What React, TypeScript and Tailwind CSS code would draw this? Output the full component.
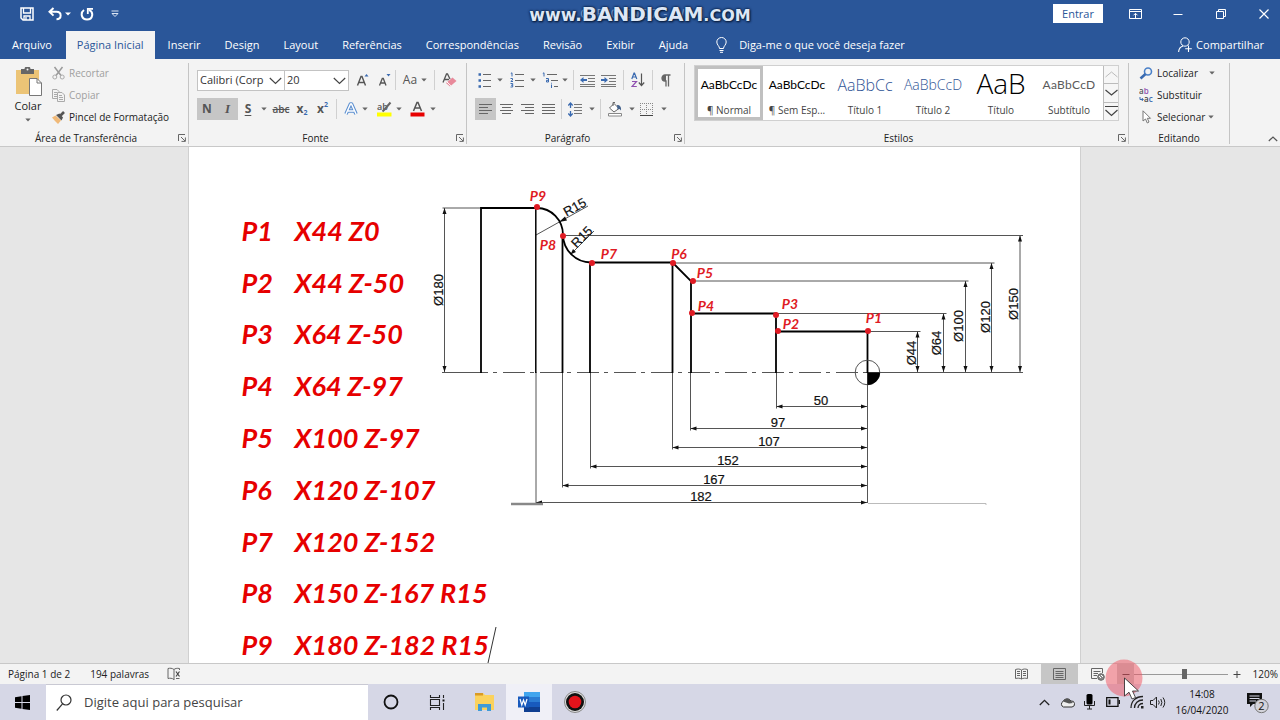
import React from "react";

type Kids = { children?: React.ReactNode };

function Icon({ w = 16, h = 16, children, className = "" }: Kids & { w?: number; h?: number; className?: string }) {
  return (
    <svg width={w} height={h} viewBox={`0 0 ${w} ${h}`} fill="none" className={`shrink-0 ${className}`} aria-hidden="true">
      {children}
    </svg>
  );
}

function Caret({ className = "" }: { className?: string }) {
  return (
    <Icon w={6} h={4} className={className}>
      <path d="M0.3 0.5H5.7L3 3.5Z" fill="#666" />
    </Icon>
  );
}

function Tool({ label, className = "w-5", children }: Kids & { label: string; className?: string }) {
  return (
    <button type="button" aria-label={label} title={label} className={`flex h-[22px] shrink-0 items-center justify-center ${className}`}>
      {children}
    </button>
  );
}

function Divider() {
  return <div className="h-5 w-px shrink-0 bg-[#d0d0d0]" />;
}

function Launcher({ label }: { label: string }) {
  return (
    <button type="button" aria-label={label} className="absolute right-0 bottom-0 p-0.5">
      <Icon w={8} h={8}>
        <path d="M0.5 7V0.5H7M3 3L7 7M7.4 3.5V7.4H3.5" stroke="#666" />
      </Icon>
    </button>
  );
}

function Group({ title, launcher = true, className, titlePad = "", children }: Kids & { title: string; launcher?: boolean; className: string; titlePad?: string }) {
  return (
    <section className={`relative mt-1 mb-0.5 flex shrink-0 flex-col border-r border-[#c4c4c4] ${className}`}>
      <div className="min-h-0 flex-1">{children}</div>
      <h2 className={`text-center text-[10px] leading-3 text-[#222] ${titlePad}`}>{title}</h2>
      {launcher && <Launcher label={`Opções de ${title}`} />}
    </section>
  );
}

function TitleBar() {
  return (
    <header className="relative flex h-[31px] shrink-0 items-center bg-[#2a5699] pl-[19px]">
      <div className="-mt-1 flex items-center">
        <Tool label="Salvar" className="w-4">
          <Icon w={14} h={14}>
            <path d="M1 1H13V13H3L1 11Z" stroke="#fff" strokeWidth="1.5" />
            <path d="M3.5 1V6H10.5V1M4 13V9H10V13M6 10V13" stroke="#fff" strokeWidth="1.3" />
          </Icon>
        </Tool>
        <Tool label="Desfazer" className="ml-3 w-4">
          <Icon w={14} h={14}>
            <path d="M5.5 1L1.5 4.8L5.5 8.6M2 4.8H8.5C14 4.8 14 12 8.5 12.2" stroke="#fff" strokeWidth="2" />
          </Icon>
        </Tool>
        <Icon w={6} h={4} className="ml-0.5">
          <path d="M0 0.5H6L3 3.5Z" fill="#fff" />
        </Icon>
        <Tool label="Refazer" className="ml-2 w-4">
          <Icon w={14} h={14}>
            <path d="M4 3C0 6 1.500 12.500 7 12.500C13 12.500 14 5 9 2.800" stroke="#fff" strokeWidth="2" />
            <path d="M7.800 7V1.800H13" stroke="#fff" strokeWidth="1.800" />
          </Icon>
        </Tool>
        <Tool label="Personalizar acesso rápido" className="ml-3 w-4">
          <Icon w={8} h={8}>
            <path d="M0.500 1H7.500M1 3.500L4 6.500L7 3.500Z" stroke="#dbe5f3" />
          </Icon>
        </Tool>
      </div>

      <div className="absolute inset-x-0 top-1 flex justify-center pl-1">
        <h1 className="text-[12px] leading-5 whitespace-pre text-[#8ba6cf]">CURSO CNC 7  -  Word</h1>
      </div>
      <div className="absolute inset-x-0 top-0 flex h-[29px] items-baseline justify-center font-['DejaVu_Sans'] leading-[29px] font-bold text-[#dde7f5] [text-shadow:0_0_3px_#0b1f40,0_0_2px_#0b1f40,1px_1px_2px_#0b1f40]">
        <span className="text-[17px]">www.</span>
        <span className="text-[20px]">BANDICAM</span>
        <span className="text-[16px]">.COM</span>
      </div>

      <div className="relative -mt-1 ml-auto flex items-center">
        <button type="button" className="mr-4 h-[19px] w-[50px] bg-white text-[11px] leading-4 text-[#2a5699]">Entrar</button>
        <div className="flex gap-[11px]">
          <Tool label="Opções de exibição da faixa" className="w-8">
            <Icon w={13} h={10}>
              <path d="M0.500 0.500H12.500V9.500H0.500ZM0.500 2.500H12.500M6.500 9V4.500M4.500 6.300L6.500 4.300L8.500 6.300" stroke="#fff" />
            </Icon>
          </Tool>
          <Tool label="Minimizar" className="w-8">
            <Icon w={10} h={10}>
              <path d="M0.500 5.500H9.500" stroke="#fff" />
            </Icon>
          </Tool>
          <Tool label="Restaurar" className="w-8">
            <Icon w={10} h={10}>
              <path d="M0.500 2.500H7.500V9.500H0.500ZM2.500 2.500V0.500H9.500V7.500H7.500" stroke="#fff" />
            </Icon>
          </Tool>
          <Tool label="Fechar" className="w-8">
            <Icon w={10} h={10}>
              <path d="M0.500 0.500L9.500 9.500M9.500 0.500L0.500 9.500" stroke="#fff" strokeWidth="1.200" />
            </Icon>
          </Tool>
        </div>
      </div>
    </header>
  );
}

const TABS = ["Inserir", "Design", "Layout", "Referências", "Correspondências", "Revisão", "Exibir", "Ajuda"];

function TabBar() {
  return (
    <nav className="flex h-7 shrink-0 items-stretch bg-[#2a5699] text-[11px] text-white">
      <a href="#arquivo" className="flex items-center pr-3.5 pl-3">Arquivo</a>
      <a href="#inicio" className="flex items-center bg-[#f3f3f3] px-[11px] text-[#2a5699]">Página Inicial</a>
      <div className="flex gap-6 pl-[13px]">
        {TABS.map((t) => (
          <a key={t} href={`#${t}`} className="flex items-center">{t}</a>
        ))}
      </div>
      <button type="button" className="ml-7 flex items-center gap-3">
        <Icon w={11} h={16}>
          <path d="M3.500 11.500C3.500 9 0.800 8 0.800 5A4.700 4.500 0 0 1 10.200 5C10.200 8 7.500 9 7.500 11.500ZM3.500 13.500H7.500M4 15.300H7" stroke="#fff" />
        </Icon>
        Diga-me o que você deseja fazer
      </button>
      <button type="button" className="mr-4 ml-auto flex items-center gap-1">
        <Icon w={14} h={16}>
          <circle cx="7" cy="5" r="4.200" stroke="#fff" />
          <path d="M0.600 15C0.800 11.500 2.500 9.800 5 9M10.500 8.500V15M7.200 11.700H13.800" stroke="#fff" strokeWidth="1.100" />
        </Icon>
        Compartilhar
      </button>
    </nav>
  );
}

function ClipboardGroup() {
  return (
    <Group title="Área de Transferência" className="w-[189px]" titlePad="pr-4">
      <div className="flex pt-1 pl-3 text-[10px] leading-4 whitespace-nowrap">
        <button type="button" className="flex w-8 shrink-0 flex-col items-center">
          <Icon w={28} h={29}>
            <path d="M2 3H25V27H2Z" fill="#ecc476" />
            <path d="M7 2H10.500A3 2.500 0 0 1 16.500 2H20V7H7Z" fill="#666" />
            <circle cx="13.500" cy="2.500" r="1" fill="#f3f3f3" />
            <path d="M15.500 11.500H23L27.500 16V28.500H15.500Z" fill="#fff" stroke="#777" />
            <path d="M23 11.500V16H27.500" stroke="#777" />
          </Icon>
          <span className="mt-0.5 text-[11px] text-[#222]">Colar</span>
          <Caret className="mt-1" />
        </button>
        <div className="-mt-0.5 ml-2 flex flex-col items-start gap-[6px] text-[#a0a0a0]">
          <button type="button" className="flex items-center gap-1">
            <Icon w={13} h={14}>
              <path d="M2.500 1L9 9.500M10.500 1L4 9.500" stroke="#9a9a9a" strokeWidth="1.500" />
              <circle cx="2.800" cy="11" r="2" stroke="#aaa" />
              <circle cx="10.200" cy="11" r="2" stroke="#aaa" />
            </Icon>
            Recortar
          </button>
          <button type="button" className="flex items-center gap-1">
            <Icon w={13} h={13}>
              <path d="M0.500 0.500H5L7 2.500V9.500H0.500ZM2 3.500H5M2 5.500H5M2 7.500H5" stroke="#aaa" />
              <path d="M5.500 3.500H10L12.500 6V12.500H5.500Z" fill="#f3f3f3" stroke="#aaa" />
              <path d="M7 6.500H10M7 8.500H11M7 10.500H11" stroke="#aaa" />
            </Icon>
            Copiar
          </button>
          <button type="button" className="flex items-center gap-1 text-[#222]">
            <Icon w={13} h={13}>
              <path d="M0 6.500L3.500 4.500L9 9.500L6 13C4 11 2 9 0 6.500Z" fill="#f0b978" />
              <path d="M4 4L7.500 2.500L11 6.500L9.500 9.500Z" fill="#555" />
              <path d="M8.500 4.500L12 1" stroke="#555" strokeWidth="2.600" />
            </Icon>
            Pincel de Formatação
          </button>
        </div>
      </div>
    </Group>
  );
}

function Combo({ label, value, className }: { label: string; value: string; className: string }) {
  return (
    <div className={`relative h-[21px] shrink-0 border border-[#c3c3c3] bg-white ${className}`}>
      <select aria-label={label} className="block h-full w-full appearance-none bg-transparent pr-4 pl-0.5 text-[11px] leading-4 text-[#333] outline-none">
        <option>{value}</option>
      </select>
      <Icon w={13} h={8} className="pointer-events-none absolute top-1.5 right-0.5">
        <path d="M0.800 1L6.500 6.500L12.200 1" stroke="#444" strokeWidth="1.200" />
      </Icon>
    </div>
  );
}

function FontGroup() {
  return (
    <Group title="Fonte" className="w-[278px]" titlePad="pr-6">
      <div className="flex items-center pt-[6px] pl-2">
        <Combo label="Fonte" value="Calibri (Corp" className="w-[88px]" />
        <Combo label="Tamanho" value="20" className="-ml-px w-[65px]" />
        <Tool label="Aumentar fonte" className="ml-0.5 w-[22px]">
          <Icon w={13} h={14}>
            <path d="M1.500 12.500L5 3.500H6L9.500 12.500M3 9.500H8" stroke="#555" strokeWidth="1.400" />
            <path d="M8.500 3.500L10.500 1L12.500 3.500Z" fill="#3a6ab0" />
          </Icon>
        </Tool>
        <Tool label="Diminuir fonte" className="w-[22px]">
          <Icon w={13} h={14}>
            <path d="M1.500 12.500L4.300 5.500H5.300L8 12.500M2.500 10H7" stroke="#555" strokeWidth="1.300" />
            <path d="M8.500 1L10.500 3.500L12.500 1Z" fill="#3a6ab0" />
          </Icon>
        </Tool>
        <Divider />
        <Tool label="Maiúsculas e minúsculas" className="w-[38px] gap-1 text-[12px] text-[#555]">
          Aa <Caret />
        </Tool>
        <Divider />
        <Tool label="Limpar formatação" className="ml-1 w-5">
          <Icon w={15} h={15}>
            <path d="M1 9.500L4.500 1H5.500L8 6M2.500 6.500H7" stroke="#555" strokeWidth="1.300" />
            <path d="M10.500 4.500L14.500 8L8 13.500L4 10Z" fill="#e8899a" />
            <path d="M5 9L9 12.800" stroke="#fff" />
          </Icon>
        </Tool>
      </div>
      <div className="mt-[7px] flex items-center pl-2">
        <Tool label="Negrito" className="w-5 bg-[#c6c6c6] text-[12px] font-bold text-[#555]">N</Tool>
        <Tool label="Itálico" className="w-[21px] bg-[#c6c6c6] font-['Liberation_Serif'] text-[13px] font-bold text-[#555] italic">I</Tool>
        <Tool label="Sublinhado" className="w-5 text-[12px] font-bold text-[#555]"><span className="underline underline-offset-2">S</span></Tool>
        <Tool label="Mais sublinhados" className="w-3"><Caret /></Tool>
        <Tool label="Tachado" className="w-[22px] text-[10px] font-semibold text-[#555]"><span className="line-through">abc</span></Tool>
        <Tool label="Subscrito" className="w-5 text-[12px] leading-3 font-bold text-[#555]">
          x<span className="mt-2 text-[7px] text-[#3a6ab0]">2</span>
        </Tool>
        <Tool label="Sobrescrito" className="w-[21px] text-[12px] leading-3 font-bold text-[#555]">
          x<span className="-mt-2 text-[7px] text-[#3a6ab0]">2</span>
        </Tool>
        <div className="ml-[3px]"><Divider /></div>
        <Tool label="Efeitos de texto" className="ml-1 w-5">
          <Icon w={14} h={14}>
            <path d="M2 12L6.500 2H7.500L12 12M4 9H10" stroke="#5b8fd0" strokeWidth="3.600" strokeLinejoin="round" />
            <path d="M2 12L6.500 2H7.500L12 12M4 9H10" stroke="#fff" strokeWidth="1.500" />
          </Icon>
        </Tool>
        <Tool label="Mais efeitos" className="w-2"><Caret /></Tool>
        <Tool label="Realce" className="ml-1 w-[22px]">
          <svg width="17" height="16" viewBox="0 0 17 16" aria-hidden="true">
            <text x="1" y="9" fontSize="9" fontWeight="600" fill="#555">ab</text>
            <path d="M14.500 1.500L8.500 8.500L6.500 10.500" stroke="#666" strokeWidth="2" fill="none" />
            <path d="M1 11.500H15.500V15.500H1Z" fill="#ff0" />
          </svg>
        </Tool>
        <Tool label="Cores de realce" className="w-2"><Caret /></Tool>
        <Tool label="Cor da fonte" className="ml-1 w-5">
          <Icon w={15} h={16}>
            <path d="M3.500 10L7 1.500H8L11.500 10M5 7H10" stroke="#555" strokeWidth="1.500" />
            <path d="M0.500 11.500H14.500V15.500H0.500Z" fill="#e80000" />
          </Icon>
        </Tool>
        <Tool label="Mais cores" className="w-3"><Caret /></Tool>
      </div>
    </Group>
  );
}

const ALIGN = [
  { label: "Alinhar à esquerda", d: "M0 1.500H13M0 4.500H9M0 7.500H13M0 10.500H9" },
  { label: "Centralizar", d: "M0 1.500H13M2 4.500H11M0 7.500H13M2 10.500H11" },
  { label: "Alinhar à direita", d: "M0 1.500H13M4 4.500H13M0 7.500H13M4 10.500H13" },
  { label: "Justificar", d: "M0 1.500H13M0 4.500H13M0 7.500H13M0 10.500H13" },
];

function ParagraphGroup() {
  return (
    <Group title="Parágrafo" className="w-[218px]" titlePad="pr-4">
      <div className="flex items-center pt-[6px] pl-2">
        <Tool label="Marcadores" className="w-[31px] gap-1.5">
          <Icon w={13} h={15}>
            <path d="M0.500 1.500H3M0.500 7.500H3M0.500 13.500H3" stroke="#3a6ab0" strokeWidth="2.400" />
            <path d="M5 1.500H13M5 7.500H13M5 13.500H13" stroke="#666" />
          </Icon>
          <Caret />
        </Tool>
        <Tool label="Numeração" className="w-[33px] gap-1.5">
          <Icon w={14} h={16}>
            <path d="M0.800 1.500L2 0.800V4.500M0.500 6.500H2.500V8L0.800 9.500H3M0.500 11.500H2.700V15H0.500M1 13.200H2.700" stroke="#3a6ab0" />
            <path d="M5 2.500H14M5 8.500H14M5 14.500H14" stroke="#666" />
          </Icon>
          <Caret />
        </Tool>
        <Tool label="Lista de vários níveis" className="w-[32px] gap-1">
          <Icon w={16} h={16}>
            <path d="M0.800 1.500L2 0.800V4.500M4 6.500H6.500V10H4.500V8.300H6.500M9.500 12.500V16M9.500 10.800V11.600" stroke="#3a6ab0" />
            <path d="M5 2.500H15M9 8.500H16M12 14.500H16" stroke="#666" />
          </Icon>
          <Caret />
        </Tool>
        <div className="ml-0.5"><Divider /></div>
        <Tool label="Diminuir recuo" className="ml-[3px] w-5">
          <Icon w={15} h={13}>
            <path d="M0 1.500H15M8 4.500H15M8 7.500H15M0 10.500H15M0 12.500H15" stroke="#777" />
            <path d="M0 6L3.500 3V5H7V7H3.500V9Z" fill="#3a6ab0" />
          </Icon>
        </Tool>
        <Tool label="Aumentar recuo" className="w-[22px]">
          <Icon w={15} h={13}>
            <path d="M0 1.500H15M8 4.500H15M8 7.500H15M0 10.500H15M0 12.500H15" stroke="#777" />
            <path d="M7 6L3.500 3V5H0V7H3.500V9Z" fill="#3a6ab0" />
          </Icon>
        </Tool>
        <div className="ml-1"><Divider /></div>
        <Tool label="Classificar" className="ml-1 w-5">
          <Icon w={14} h={16}>
            <path d="M0.800 7L3 1H3.500L5.800 7M1.500 5H5" stroke="#3a6ab0" strokeWidth="1.200" />
            <path d="M1 9.500H5.500L1 14.500H5.800" stroke="#9050b0" strokeWidth="1.200" />
            <path d="M10.500 1.500V13.500M7.800 10.500L10.500 13.500L13.200 10.500" stroke="#555" strokeWidth="1.200" />
          </Icon>
        </Tool>
        <div className="ml-1"><Divider /></div>
        <Tool label="Mostrar tudo" className="ml-[3px] w-5">
          <Icon w={10} h={13}>
            <path d="M9.500 1H4A3 3 0 0 0 4 7H5V12.500M7.500 1V12.500" stroke="#666" strokeWidth="1.300" />
            <path d="M5 1H4A3 3 0 0 0 4 7H5Z" fill="#666" />
          </Icon>
        </Tool>
      </div>
      <div className="mt-[7px] flex items-center pl-2">
        {ALIGN.map((a, i) => (
          <Tool key={a.label} label={a.label} className={i === 0 ? "w-[21px] bg-[#c6c6c6]" : "w-[21px]"}>
            <Icon w={13} h={12}><path d={a.d} stroke="#666" /></Icon>
          </Tool>
        ))}
        <div className="ml-0.5"><Divider /></div>
        <Tool label="Espaçamento" className="ml-1 w-[30px] gap-1.5">
          <Icon w={15} h={15}>
            <path d="M2.500 1V6M2.500 9V14M0.300 3.500L2.500 1L4.700 3.500M0.300 11.500L2.500 14L4.700 11.500" stroke="#3a6ab0" strokeWidth="1.300" />
            <path d="M6 2.500H14M6 5.500H14M6 8.500H14M6 11.500H14" stroke="#777" />
          </Icon>
          <Caret />
        </Tool>
        <div className="ml-1"><Divider /></div>
        <Tool label="Sombreamento" className="ml-1 w-[32px] gap-1.5">
          <Icon w={16} h={16}>
            <path d="M7 2.500L12 7.500L7 11L2.500 7Z" fill="#fff" stroke="#666" />
            <path d="M6 5V1.500H8" stroke="#666" />
            <path d="M10 4C13 4 14.500 6 14 9.500C13 8 12 7.500 10.500 8.500Z" fill="#44628c" />
            <path d="M1.500 12.500H14.500V15H1.500Z" fill="#fff" stroke="#888" />
          </Icon>
          <Caret />
        </Tool>
        <Tool label="Bordas" className="w-[32px] gap-2">
          <Icon w={13} h={13}>
            <path d="M0.500 0V12M6.500 0V12M12.500 0V12M0 0.500H13M0 6.500H13" stroke="#888" strokeDasharray="1 1" />
            <path d="M0 12.500H13" stroke="#444" />
          </Icon>
          <Caret />
        </Tool>
      </div>
    </Group>
  );
}

const STYLES = [
  { name: "¶ Normal", sample: "AaBbCcDc", cls: "leading-[38px] text-[12px] text-black font-['Lato']" },
  { name: "¶ Sem Esp...", sample: "AaBbCcDc", cls: "leading-[38px] text-[12px] text-black font-['Lato']" },
  { name: "Título 1", sample: "AaBbCc", cls: "leading-[38px] text-[16px] text-[#2f5496] font-light" },
  { name: "Título 2", sample: "AaBbCcD", cls: "leading-[38px] text-[14px] text-[#2f5496] font-light" },
  { name: "Título", sample: "AaB", cls: "leading-[34px] text-[28px] text-black font-light" },
  { name: "Subtítulo", sample: "AaBbCcD", cls: "leading-[38px] text-[12px] text-[#5a5a5a] font-['Lato'] tracking-wide" },
];

function StylesGroup() {
  return (
    <Group title="Estilos" className="w-[444px]" titlePad="pr-4">
      <div className="mt-[2px] ml-[9px] flex w-[425px] border border-[#d0d0d0] bg-white">
        {STYLES.map((s, i) => (
          <button
            key={s.name}
            type="button"
            className={`flex h-[54px] w-[68px] shrink-0 flex-col pb-px ${i === 0 ? "outline-[3px] -outline-offset-[3px] outline-[#c0c0c0]" : ""}`}
          >
            <span className={`h-[36px] w-full text-center whitespace-nowrap ${s.cls}`}>{s.sample}</span>
            <span className="w-full text-center text-[10px] leading-4 whitespace-nowrap text-[#444]">{s.name}</span>
          </button>
        ))}
        <div className="flex flex-1 flex-col divide-y divide-[#bbb] border-l border-[#bbb] bg-[#f6f6f6]">
          <button type="button" aria-label="Estilos anteriores" className="flex flex-1 items-center justify-center">
            <Icon w={13} h={7}><path d="M0.500 6L6.500 1L12.500 6" stroke="#bbb" /></Icon>
          </button>
          <button type="button" aria-label="Próximos estilos" className="flex flex-1 items-center justify-center">
            <Icon w={13} h={7}><path d="M0.500 1L6.500 6L12.500 1" stroke="#444" strokeWidth="1.200" /></Icon>
          </button>
          <button type="button" aria-label="Mais estilos" className="flex flex-1 items-center justify-center">
            <Icon w={13} h={12}><path d="M0 1.500H13M0.500 5L6.500 10.500L12.500 5" stroke="#444" strokeWidth="1.200" /></Icon>
          </button>
        </div>
      </div>
    </Group>
  );
}

function EditingGroup() {
  return (
    <Group title="Editando" launcher={false} className="w-[101px]">
      <div className="flex flex-col items-start gap-[6px] pt-0.5 pl-2.5 text-[10px] leading-4 text-[#222]">
        <button type="button" className="flex items-center gap-[3px]">
          <Icon w={15} h={13}>
            <circle cx="9" cy="4.500" r="3.500" stroke="#4a80c8" strokeWidth="1.600" />
            <path d="M6.500 7L1.500 11.500" stroke="#3a6ab0" strokeWidth="2.600" />
          </Icon>
          Localizar <Caret className="ml-2" />
        </button>
        <button type="button" className="flex items-center gap-[3px]">
          <svg width="15" height="15" viewBox="0 0 15 15" fontSize="8" fontWeight="600" aria-hidden="true">
            <text x="0" y="6" fill="#555">a<tspan fill="#9050b0">b</tspan></text>
            <text x="5" y="14" fill="#444">a<tspan fill="#3a6ab0">c</tspan></text>
            <path d="M1 9V11.500H4M2.800 10L4.300 11.500L2.800 13" stroke="#3a6ab0" fill="none" />
          </svg>
          Substituir
        </button>
        <button type="button" className="flex items-center gap-[3px]">
          <Icon w={15} h={14}>
            <path d="M4 0.800V11L6.500 9L8.300 13L10 12L8.300 8.300H11.500Z" fill="#fff" stroke="#777" />
          </Icon>
          Selecionar <Caret />
        </button>
      </div>
    </Group>
  );
}

function Ribbon() {
  return (
    <div className="flex h-[88px] shrink-0 border-b border-[#c8c8c8] bg-[#f3f3f3]">
      <ClipboardGroup />
      <FontGroup />
      <ParagraphGroup />
      <StylesGroup />
      <EditingGroup />
      <button type="button" aria-label="Recolher a faixa de opções" className="mt-auto mr-0.5 mb-1 ml-auto">
        <Icon w={10} h={6}><path d="M0.800 5L5 1L9.200 5" stroke="#555" strokeWidth="1.200" /></Icon>
      </button>
    </div>
  );
}

const PROGRAM = [
  ["P1", "X44 Z0"],
  ["P2", "X44 Z-50"],
  ["P3", "X64 Z-50"],
  ["P4", "X64 Z-97"],
  ["P5", "X100 Z-97"],
  ["P6", "X120 Z-107"],
  ["P7", "X120 Z-152"],
  ["P8", "X150 Z-167 R15"],
  ["P9", "X180 Z-182 R15"],
];

const POINTS = [
  { n: "P9", x: 537, y: 207, lx: 538, ly: 201 },
  { n: "P8", x: 563, y: 236, lx: 548, ly: 250 },
  { n: "P7", x: 592, y: 263, lx: 609, ly: 259 },
  { n: "P6", x: 673, y: 263, lx: 679, ly: 259 },
  { n: "P5", x: 693, y: 281, lx: 705, ly: 278 },
  { n: "P4", x: 692, y: 313, lx: 706, ly: 311 },
  { n: "P3", x: 776, y: 315, lx: 790, ly: 309 },
  { n: "P2", x: 778, y: 331, lx: 791, ly: 329 },
  { n: "P1", x: 868, y: 331, lx: 874, ly: 323 },
];

const LENGTHS = [
  { v: "50", x: 776.5, y: 406.5, t: 821 },
  { v: "97", x: 690.5, y: 428.5, t: 778 },
  { v: "107", x: 672.5, y: 447.5, t: 769 },
  { v: "152", x: 590.5, y: 466.5, t: 728 },
  { v: "167", x: 562.5, y: 485.5, t: 714 },
  { v: "182", x: 536, y: 502.5, t: 701 },
];

const DIAMETERS = [
  { v: "Ø44", x: 917.5, y: 331.5, from: 867, c: 353, tx: 916 },
  { v: "Ø64", x: 943.5, y: 313.5, from: 776, c: 343, tx: 941 },
  { v: "Ø100", x: 965.5, y: 281, from: 691, c: 326, tx: 963 },
  { v: "Ø120", x: 991.5, y: 263, from: 672, c: 317, tx: 990 },
  { v: "Ø150", x: 1020, y: 235.5, from: 563, c: 304, tx: 1018 },
  { v: "Ø180", x: 444.5, y: 208, from: 481, c: 290, tx: 443 },
];

function Drawing() {
  return (
    <svg viewBox="430 180 610 330" width="610" height="330" className="shrink-0" role="img" aria-label="Desenho técnico da peça torneada">
      <g stroke="#555" fill="none">
        {DIAMETERS.map((d) => (
          <path key={d.v} d={`M${d.from} ${d.y}H${d.from > d.x ? d.x - 2 : d.x + 3}M${d.x} ${d.y}V372`} />
        ))}
        {LENGTHS.map((l) => (
          <path key={l.v} d={`M${l.x} 372V${l.y + 2}M${l.x} ${l.y}H867`} />
        ))}
        <path d="M867.500 372V503M442 372.500H488M867 372.500H1023" />
        <path d="M493 372.500H867" strokeDasharray="4 6 22 5" />
        <path d="M536 235L588 206M571 254L594 231" />
      </g>
      <g fill="#111">
        {DIAMETERS.map((d) => (
          <path key={d.v} d={`M${d.x} ${d.y}l-2 6h4ZM${d.x} 372l-2 -6h4Z`} />
        ))}
        {LENGTHS.map((l) => (
          <path key={l.v} d={`M${l.x} ${l.y}l6 -2v4ZM867 ${l.y}l-6 -2v4Z`} />
        ))}
        <path d="M559 222L565 216.500L567 220.500ZM570.500 254.500L573 249L576 252Z" />
      </g>
      <g stroke="#000" strokeWidth="1.800" fill="none">
        <path d="M481 373V208H537A26 27 0 0 1 563 235A28 28 0 0 0 591 262.500H672.500L691 281V373" />
        <path d="M562.500 235V373M590 263V373M672.500 263V373M691 313.500H776V373M776 331.500H867.500V373" />
        <path d="M535.800 208V373" strokeWidth="1.500" />
      </g>
      <circle cx="867.500" cy="372.500" r="12.300" stroke="#555" fill="none" />
      <path d="M867.500 372.500H880A12.500 12.500 0 0 1 867.500 385Z" fill="#000" />
      <path d="M511 504H543" stroke="#888" strokeWidth="2.500" />
      <path d="M868 503.500H986V505" stroke="#bbb" fill="none" />
      <g className="font-['Liberation_Sans'] text-[13px]" fill="#111" stroke="#111" strokeWidth="0.200" textAnchor="middle">
        {LENGTHS.map((l) => (
          <text key={l.v} x={l.t} y={l.y - 2}>{l.v}</text>
        ))}
        {DIAMETERS.map((d) => (
          <text key={d.v} transform={`translate(${d.tx} ${d.c}) rotate(-90)`}>{d.v}</text>
        ))}
        <text transform="translate(577 211) rotate(-29)">R15</text>
        <text transform="translate(585 240) rotate(-45)">R15</text>
      </g>
      <g className="font-['Lato'] text-[14px] font-bold italic" fill="#e01b24" textAnchor="middle">
        {POINTS.map((p) => (
          <g key={p.n}>
            <circle cx={p.x} cy={p.y} r="3" />
            <text x={p.lx} y={p.ly}>{p.n}</text>
          </g>
        ))}
      </g>
    </svg>
  );
}

function Document() {
  return (
    <main className="flex min-h-0 flex-1 justify-center overflow-hidden bg-[#e6e6e6] pr-3">
      <article className="flex w-[893px] items-start border-x border-[#d0d0d0] bg-white pt-[33px] pl-[53px]">
        <div className="mt-[25px] grid h-[466px] w-[188px] shrink-0 grid-rows-9 font-['Lato'] text-[27px] font-bold whitespace-nowrap text-[#e60000] italic">
          {PROGRAM.map(([p, code], i) => (
            <p key={p} className="flex items-center leading-[50px]">
              <span className="w-[53px] shrink-0">{p}</span>
              <span>{code}</span>
              {i === PROGRAM.length - 1 && (
                <Icon w={10} h={36} className="-ml-0.5"><path d="M1 36L9 0" stroke="#333" /></Icon>
              )}
            </p>
          ))}
        </div>
        <Drawing />
      </article>
    </main>
  );
}

function StatusBar() {
  return (
    <footer className="flex h-[21px] shrink-0 items-center border-t border-[#c8c8c8] bg-[#f3f3f3] pl-2 text-[10px] leading-4 text-[#222]">
      <span>Página 1 de 2</span>
      <span className="ml-5">194 palavras</span>
      <button type="button" aria-label="Revisão de texto" className="ml-[18px]">
        <Icon w={14} h={14}>
          <path d="M7 2.500C5 1 3 1 1 1.500V11.500C3 11 5 11 7 12.500M7 2.500C8 1.500 10 1 12.500 1.500V3M7 2.500V13M12.500 11.500H9" stroke="#666" />
          <path d="M9 4.500L12.500 9.500M12.500 4.500L9 9.500" stroke="#444" strokeWidth="1.200" />
        </Icon>
      </button>
      <div className="ml-auto flex items-center">
        <Tool label="Modo de leitura" className="w-10">
          <Icon w={13} h={12}>
            <path d="M6.500 2C5 0.800 2.500 0.800 0.500 1.500V10.500C2.500 10 5 10 6.500 11C8 10 10.500 10 12.500 10.500V1.500C10.500 0.800 8 0.800 6.500 2V11M2 3.500H5M2 5.500H5M2 7.500H5M8 3.500H11M8 5.500H11M8 7.500H11" stroke="#666" />
          </Icon>
        </Tool>
        <button type="button" aria-label="Layout de impressão" className="flex h-5 w-[37px] items-center justify-center bg-[#c6c6c6]">
          <Icon w={13} h={12}><path d="M0.500 0.500H12.500V11.500H0.500ZM2.500 3.500H10.500M2.500 5.500H10.500M2.500 7.500H10.500M2.500 9.500H10.500" stroke="#666" /></Icon>
        </button>
        <Tool label="Layout da Web" className="w-[39px]">
          <Icon w={14} h={13}>
            <path d="M6 10.500H0.500V0.500H11.500V5M2.500 3.500H9.500M2.500 5.500H7M2.500 7.500H6" stroke="#666" />
            <circle cx="10" cy="9" r="3.300" fill="#888" stroke="#666" />
            <path d="M8 8L10 10M10 7L12 9" stroke="#fff" />
          </Icon>
        </Tool>
        <button type="button" aria-label="Reduzir" className="flex h-5 w-[17px] items-center justify-center bg-[#c6c6c6]">
          <Icon w={8} h={8}><path d="M0.500 4.500H7.500" stroke="#333" /></Icon>
        </button>
        <input
          type="range"
          aria-label="Zoom"
          defaultValue={54}
          className="h-4 w-[94px] appearance-none bg-[linear-gradient(#999,#999)] bg-[length:100%_1px] bg-center bg-no-repeat [&::-webkit-slider-thumb]:h-[10px] [&::-webkit-slider-thumb]:w-[5px] [&::-webkit-slider-thumb]:appearance-none [&::-webkit-slider-thumb]:bg-[#666]"
        />
        <Tool label="Ampliar" className="w-[17px]">
          <Icon w={8} h={8}><path d="M0.500 4.500H7.500M4 1V8" stroke="#444" /></Icon>
        </Tool>
        <button type="button" className="w-[35px] pr-0.5 text-right">120%</button>
      </div>
    </footer>
  );
}

function TaskButton({ label, className = "", children }: Kids & { label: string; className?: string }) {
  return (
    <button type="button" aria-label={label} className={`flex w-[46px] shrink-0 items-center justify-center ${className}`}>
      {children}
    </button>
  );
}

function Taskbar() {
  return (
    <div className="flex h-9 shrink-0 items-stretch bg-[#d6d7e6]">
      <TaskButton label="Iniciar">
        <Icon w={15} h={15} className="-ml-0.5">
          <path d="M0 2.200L6.500 1.300V7H0ZM7.500 1.100L15 0V7H7.500ZM0 8H6.500V13.700L0 12.800ZM7.500 8H15V15L7.500 13.900Z" fill="#000" />
        </Icon>
      </TaskButton>
      <label className="flex w-[322px] items-center gap-3 border-t border-[#c9c9d3] bg-white pl-2.5">
        <Icon w={16} h={18}>
          <circle cx="10" cy="6" r="5" stroke="#333" strokeWidth="1.200" />
          <path d="M6.500 9.800L0.800 16.500" stroke="#333" strokeWidth="1.200" />
        </Icon>
        <input type="text" aria-label="Pesquisar" placeholder="Digite aqui para pesquisar" className="min-w-0 flex-1 text-[13px] outline-none placeholder:text-[#444]" />
      </label>
      <TaskButton label="Cortana">
        <Icon w={16} h={16}><circle cx="8" cy="8" r="6.500" stroke="#111" strokeWidth="1.800" /></Icon>
      </TaskButton>
      <TaskButton label="Visão de tarefas">
        <Icon w={16} h={15}>
          <path d="M1.500 0V2.500H10.500V0M1.500 15V12.500H10.500V15M1.500 4.500H10.500V10.500H1.500ZM14.500 0V3M14.500 8V15" stroke="#222" strokeWidth="1.100" />
          <path d="M13.500 4.500H15.500V6.500H13.500Z" fill="#111" />
        </Icon>
      </TaskButton>
      <TaskButton label="Explorador de Arquivos">
        <Icon w={22} h={20} className="ml-1">
          <path d="M1 1H9L11 3H20V18H1Z" fill="#fbd25c" />
          <path d="M1 1H9V3.500H1Z" fill="#d99a25" />
          <path d="M4 19V12H17V19H13V15.500H8V19Z" fill="#3f9bd8" />
        </Icon>
      </TaskButton>
      <TaskButton label="Word" className="bg-[#f0f0f7]">
        <Icon w={23} h={20}>
          <path d="M6 0H22V5H6Z" fill="#41a5ee" />
          <path d="M6 5H22V10H6Z" fill="#2b7cd3" />
          <path d="M6 10H22V15H6Z" fill="#185abd" />
          <path d="M6 15H22V20H6Z" fill="#103f91" />
          <path d="M0 4.500H11V15.500H0Z" fill="#185abd" />
          <path d="M2 7L3.800 13L5.500 8L7.200 13L9 7" stroke="#fff" strokeWidth="1.200" />
        </Icon>
      </TaskButton>
      <TaskButton label="Bandicam">
        <Icon w={22} h={22}>
          <circle cx="11" cy="11" r="10.500" stroke="#888" fill="#ddd" />
          <circle cx="11" cy="11" r="9" fill="#111" />
          <circle cx="11" cy="11" r="6.300" fill="#e3131b" />
        </Icon>
      </TaskButton>
      <div className="ml-auto flex items-center">
        <Tool label="Ícones ocultos" className="w-[22px]">
          <Icon w={11} h={7}><path d="M0.800 6L5.500 1.300L10.200 6" stroke="#222" strokeWidth="1.300" /></Icon>
        </Tool>
        <Tool label="OneDrive" className="w-6">
          <Icon w={15} h={11}>
            <path d="M3.500 10A3 3 0 0 1 3 4.500A4.500 4.500 0 0 1 11 4A3 3 0 0 1 12 10Z" fill="#eee" stroke="#333" />
            <path d="M3 4.500A4.500 4.500 0 0 1 11 4L13 6L9 6.500Z" fill="#555" />
          </Icon>
        </Tool>
        <Tool label="Microfone" className="w-[21px]">
          <Icon w={11} h={16}>
            <rect x="2.500" y="0" width="6" height="10.500" rx="1.500" fill="#000" />
            <path d="M0.500 7V11.500H10.500V7M5.500 11.500V15M3 15H8" stroke="#222" />
          </Icon>
        </Tool>
        <Tool label="Bateria" className="w-[26px]">
          <Icon w={14} h={10}>
            <path d="M0.700 0.700H12V9.300H0.700Z" stroke="#111" strokeWidth="1.300" />
            <path d="M13.300 3V7" stroke="#111" strokeWidth="1.300" />
            <path d="M2.500 2.500H4.500V7.500H2.500Z" fill="#111" />
          </Icon>
        </Tool>
        <Tool label="Rede" className="w-[21px]">
          <Icon w={14} h={14}>
            <path d="M1 13C1 6 6 1.500 13 1.500M4.500 13C4.500 8.500 8 5 13 5M8 13C8 10.500 10 8.500 13 8.500" stroke="#222" strokeWidth="1.300" />
            <path d="M11 11H13.500V13.500H11Z" fill="#222" />
          </Icon>
        </Tool>
        <Tool label="Volume" className="w-[22px]">
          <Icon w={16} h={13}>
            <path d="M0.500 4.500H3L6.500 1V12L3 8.500H0.500Z" stroke="#222" />
            <path d="M8.500 4.500Q10 6.500 8.500 8.500M10.800 3Q13 6.500 10.800 10M13 1.500Q16.500 6.500 13 11.500" stroke="#222" />
          </Icon>
        </Tool>
        <time dateTime="2020-04-16T14:08" className="w-[66px] text-center text-[10px] leading-4 text-[#111]">
          14:08
          <br />
          16/04/2020
        </time>
        <Tool label="Notificações" className="w-[45px]">
          <svg width="24" height="24" viewBox="0 0 24 24" aria-hidden="true">
            <path d="M1 3H16V14H7L4 17V14H1Z" fill="#111" />
            <path d="M3.500 6H13.500M3.500 8.500H13.500M3.500 11H10" stroke="#d6d7e6" />
            <circle cx="15.500" cy="16" r="6.700" fill="#d3d3da" stroke="#777" />
            <text x="15.500" y="20" fontSize="11" textAnchor="middle" fill="#111">2</text>
          </svg>
        </Tool>
      </div>
    </div>
  );
}

function Pointer() {
  return (
    <div className="pointer-events-none absolute right-[135px] bottom-[12px]" aria-hidden="true">
      <Icon w={40} h={52}>
        <circle cx="19" cy="22" r="18.500" fill="#f0525f" fillOpacity="0.500" />
        <path d="M19.500 22V40L24 36.200L27 43L30.500 41.500L27.500 35H33.500Z" fill="#fff" stroke="#222" strokeWidth="0.800" />
      </Icon>
    </div>
  );
}

export default function App() {
  return (
    <div className="relative flex h-screen flex-col overflow-hidden font-['Open_Sans',sans-serif]">
      <TitleBar />
      <TabBar />
      <Ribbon />
      <Document />
      <StatusBar />
      <Taskbar />
      <Pointer />
    </div>
  );
}
